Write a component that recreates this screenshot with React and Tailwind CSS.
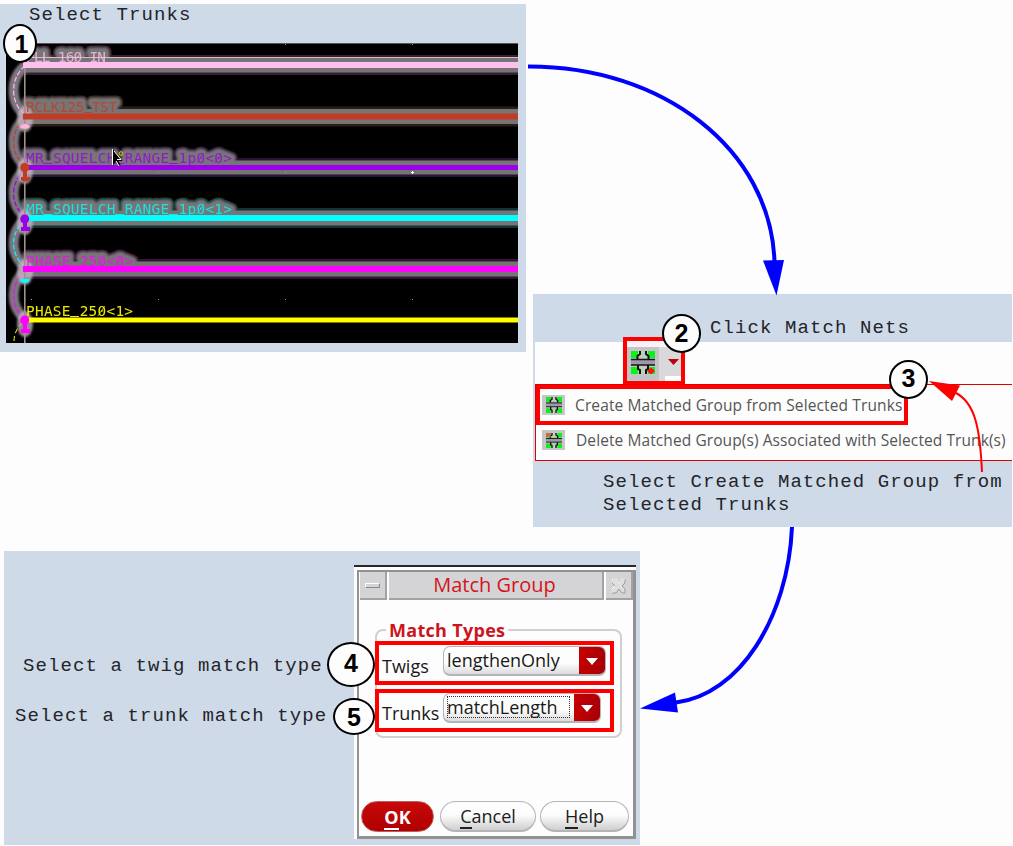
import React from "react";

const MONO = "font-['Liberation_Mono',monospace] text-[19px] leading-[23px] tracking-[1.09px] text-[#24242a] whitespace-pre";
const UI = "font-['Open_Sans','Noto_Sans',sans-serif] whitespace-nowrap";

const nets = [
  { label: "PLL_160_IN", color: "#ffc0ee", glow: "#35202f", y: 62, h: 6, base: 62, len: 80, lit: true },
  { label: "RCLK125_TST", color: "#c03c24", glow: "#2c1c18", y: 113.5, h: 6, base: 112, len: 91, lit: true },
  { label: "MR_SQUELCH_RANGE_1p0<0>", color: "#9a00ea", glow: "#281434", y: 165, h: 5, base: 163, len: 206, lit: true },
  { label: "MR_SQUELCH_RANGE_1p0<1>", color: "#00ffff", glow: "#0e3436", y: 215, h: 6, base: 214, len: 206, lit: true },
  { label: "PHASE_250<0>", color: "#ff00ff", glow: "#351238", y: 266, h: 6, base: 265.5, len: 107, lit: true },
  { label: "PHASE_250<1>", color: "#ffff00", glow: "#000000", y: 317.5, h: 5, base: 316, len: 107, lit: false },
];

const arcs = [
  { d: "M25 66C10 78 10 102 24 114", color: "#ffc0ee" },
  { d: "M25 119C10 130 10 153 24 165", color: "#c03c24" },
  { d: "M25 170C10 182 10 204 24 216", color: "#9a00ea" },
  { d: "M25 220C10 232 10 254 24 266", color: "#00ffff" },
  { d: "M25 271C10 284 10 306 24 318", color: "#ff00ff" },
];

function Marks({ net }) {
  const step = net.len / net.label.length;
  return [...net.label].map((ch, i) => {
    const x = 25.5 + i * step;
    if (ch === "_") return <rect key={i} x={x} y={net.base} width={step} height="1" fill={net.color} />;
    if (ch === "0") return <path key={i} d={`M${x + 1} ${net.base}l${step - 2} -10`} stroke={net.color} strokeWidth="0.8" />;
    return null;
  });
}

function TrunkCanvas() {
  return (
    <svg className="block" width="512" height="300" viewBox="6 43 512 300" fontFamily="'DejaVu Sans Mono', monospace" fontSize="14.4">
      <defs>
        <filter id="soft" x="-50%" y="-40%" width="200%" height="180%">
          <feGaussianBlur stdDeviation="1" />
        </filter>
      </defs>
      <rect x="6" y="43" width="512" height="300" fill="#000" />
      <rect x="6" y="43" width="512" height="1" fill="#555" />
      {nets.filter((n) => n.lit).map((n, i) => (
        <g key={i}>
          <rect x="24" y={n.y - 7} width="494" height={n.h + 14} fill={n.glow} />
          <text x="26" y={n.base} textLength={n.len} fill={n.glow} stroke={n.glow} strokeWidth="13" strokeLinejoin="round" aria-hidden="true">{n.label}</text>
          <rect x="24" y={n.y - 4.5} width="494" height={n.h + 9} fill="#777476" />
          <text x="26" y={n.base} textLength={n.len} fill="#777476" stroke="#777476" strokeWidth="9" strokeLinejoin="round" filter="url(#soft)" aria-hidden="true">{n.label}</text>
        </g>
      ))}
      {arcs.map((a, i) => (
        <path key={i} d={a.d} fill="none" stroke="#7d757f" strokeWidth="10" filter="url(#soft)" />
      ))}
      {arcs.map((a, i) => (
        <path key={i} d={a.d} fill="none" stroke={a.color} strokeWidth="1.2" strokeDasharray="5 2" />
      ))}
      <path d="M14 341Q14 330 24 321" fill="none" stroke="#ffff00" strokeDasharray="5 3" />
      <rect x="24" y="57" width="494" height="1" fill="#e0b8c8" />
      {[118, 170, 221, 271, 323].map((y, i) => (
        <ellipse key={i} cx="25" cy={y + 1} rx="8" ry="13" fill="#c9b9c6" opacity="0.75" filter="url(#soft)" />
      ))}
      <rect x="24" y="66" width="1.6" height="277" fill="#a58e8c" />
      {nets.map((n, i) => (
        <g key={i}>
          <rect x={i < 2 || i === 4 ? 23 : 28} y={n.y} width="495" height={n.h} fill={n.color} />
          <g opacity={n.lit ? 0.8 : 0.92}>
            <text x="26" y={n.base} textLength={n.len} fill={n.color}>{n.label}</text>
            <Marks net={n} />
          </g>
        </g>
      ))}
      <path d="M20 127a5 3 0 0 1 10 0q-5 4 -10 0z" fill="#ffb4dc" />
      <path d="M20 279h10q-1 4 -5 4t-5 -4z" fill="#00ffff" />
      <g fill="#c03c24"><circle cx="24.700" cy="167.500" r="4.500" /><path d="M23 168h4v9h3v3q-5 3 -9 0v-3h2z" /></g>
      <g fill="#9a00ea"><circle cx="24.700" cy="219" r="4.500" /><path d="M23 220h4v7h3v4h-9v-4h2z" /></g>
      <g fill="#ff00ff"><circle cx="24.700" cy="320" r="4.500" /><path d="M23 321h4v8h3v4h-9v-4h2z" /></g>
      <path d="M113 149v16l3.500-3.500 2 4.500 2-1-2-4h4z" fill="#000" />
      <path d="M112.500 149v16M116 161l3 5M114 151l7 8.500h-4" stroke="#fff" strokeWidth="1" fill="none" />
      <circle cx="121" cy="153.500" r="1.800" fill="none" stroke="#d8d000" />
      <path d="M411 172.500h3M412.500 171v3" stroke="#fff" />
      <path d="M285 44.500h1M412 44.500h1M158 172.500h1M285 172.500h1M158 299.500h1M285 299.500h1M412 299.500h1M31 299.500h1" stroke="#999" />
    </svg>
  );
}

function NetIcon({ w, h, dot, mark }) {
  return (
    <svg className="block shrink-0" width={w} height={h} viewBox="0 0 24 23" preserveAspectRatio="none">
      <path d="M0 0h24v7H0zM0 16h24v7H0z" fill="#0cf01c" />
      <path d="M7 0h10v7H7zM7 16h10v7H7z" fill="#b9d2b9" />
      <path d="M0 8h24v6H0z" fill="#a09aa8" />
      <path d="M0 8.500h24M0 14h24" stroke="#1a1420" strokeWidth="1.400" />
      <path d="M9 0v3L6.500 5v3M15 0v3l2.500 2v3M7 14v4l2 1v4M17 14v4l-2 1v4" fill="none" stroke="#101010" strokeWidth="2" />
      {dot && <path d="M20 17l3.500 3-3.500 3-3.500-3z" fill="#ff1010" stroke="#ff1010" />}
      {mark && <path d="M0 0l7 6M7 0L0 6" stroke="#ff4848" strokeWidth="2.500" />}
    </svg>
  );
}

function MenuPanel() {
  return (
    <section className="mt-[294px] ml-[7px] flex h-[233px] w-[479px] flex-col bg-[#cedae7]">
      <h2 className={"h-12 pt-[23px] pl-[177px] " + MONO}>Click Match Nets</h2>
      <div className="ml-[2px] flex h-[42px] bg-[#fdfdfd]">
        <div className="ml-[88px] -mt-[5px] flex h-12 w-[62px] items-end border-4 border-[#ff0000] bg-[#f8f2f8]">
          <div className="flex h-[34px] w-8 items-start justify-center bg-[#c4c4c6] pt-1">
            <NetIcon w={24} h={23} dot />
          </div>
          <div className="flex h-[34px] flex-1 flex-col bg-[#d9d8da]">
            <svg className="mt-[12px] ml-[9px]" width="11" height="6"><path d="M0 0h11L5.500 6z" fill="#c00010" /></svg>
            <span className="mt-auto ml-[6px] h-[5px] bg-white" />
          </div>
        </div>
      </div>
      <div className="ml-[2px] flex h-[77px] flex-col border border-r-0 border-[#e00000] bg-[#fdfdfd]">
        <div className="flex h-10 w-[372px] items-center border-4 border-[#ff0000] pl-[2px]">
          <div className="flex h-5 w-[23px] items-center justify-center bg-[#c6c6c8]"><NetIcon w={16} h={16} /></div>
          <span className={"ml-[10px] pt-px text-[15.5px] tracking-[0.12px] text-[#555] " + UI}>Create Matched Group from Selected Trunks</span>
        </div>
        <div className="flex h-[30px] items-center pl-[6px]">
          <div className="flex h-5 w-[23px] items-center justify-center bg-[#c6c6c8]"><NetIcon w={16} h={15} mark /></div>
          <span className={"ml-[11px] pt-px text-[15.5px] tracking-[0.09px] text-[#555] " + UI}>Delete Matched Group(s) Associated with Selected Trunk(s)</span>
        </div>
      </div>
      <p className={"pt-[10px] pl-[70px] " + MONO}>{"Select Create Matched Group from\nSelected Trunks"}</p>
    </section>
  );
}

function Combo({ value, focused }) {
  return (
    <div className={(focused ? "w-[158px]" : "w-[163px] mt-px") + " flex h-[30px] overflow-hidden rounded-[7px] border border-b-2 border-[#b4b4b6] bg-linear-to-b from-[#fdfdfd] from-60% to-[#dcdcde]"}>
      <div className={(focused ? "ml-[3px] mt-[2px] h-[22px] border border-dotted border-[#333]" : "ml-[3px] h-[26px]") + " flex flex-1 items-center"}>
        <span className={(focused ? "-ml-px " : "") + "text-[18px] leading-5 text-[#181818] " + UI}>{value}</span>
      </div>
      <div className="ml-1 flex h-[29px] w-[26px] items-center justify-center bg-linear-to-r from-[#c40000] to-[#a80008]">
        <svg width="12" height="7"><path d="M0 0h12L6 7z" fill="#fff" /></svg>
      </div>
    </div>
  );
}

function PillButton({ first, rest, cls }) {
  return (
    <button className={"flex h-[31px] items-center justify-center rounded-full border pt-[3px] text-[18px] " + cls + " " + UI}>
      <span className="border-b-2 border-current leading-[21px]">{first}</span>
      <span className="border-b-2 border-transparent leading-[21px]">{rest}</span>
    </button>
  );
}

function MatchDialog() {
  return (
    <div className="flex h-[274px] w-[282px] flex-col border-t-2 border-[#282830] bg-[#fdfdfd] pt-[3px] pl-[3px]">
      <div className="flex flex-1 flex-col border-t-2 border-r-[3px] border-b-[3px] border-l-2 border-[#929292] bg-[#fdfdfd]">
        <div className="ml-px flex h-[28px] w-[273px] gap-[2px]">
          <div className="flex w-[27px] items-center justify-center border-r-2 border-b-2 border-[#a2a2a4] bg-[#d4d4d6]">
            <span className="h-[5px] w-[15px] border border-r-[#888] border-b-[#888] border-t-white border-l-white" />
          </div>
          <div className={"flex flex-1 items-center justify-center border-r-2 border-b-2 border-[#a2a2a4] bg-[#d4d4d6] pr-[2px] text-[20px] leading-6 text-[#d41420] " + UI}>Match Group</div>
          <div className="flex w-[27px] items-center justify-center border-r-2 border-b-2 border-[#a2a2a4] bg-[#d4d4d6]">
            <svg width="17" height="17" viewBox="0 0 17 17">
              <path d="M2 2h4l3 4 3-4h3v4l-3 3 3 3v4h-3l-3-4-3 4H2v-4l3-3-3-3z" fill="#dededf" stroke="#9c9c9e" />
              <path d="M2 6V2h4l3 4 3-4h3M2 16v-4l3-3" fill="none" stroke="#fff" />
            </svg>
          </div>
        </div>
        <fieldset className="mt-[18px] ml-[16px] flex h-[120px] w-[247px] flex-col rounded-[8px] border-2 border-[#d0d0d0]">
          <legend className={"ml-[9px] px-[3px] text-[18px] leading-6 font-bold tracking-[0.3px] text-[#cc1420] " + UI}>Match Types</legend>
          <div className="-ml-[2px] -mt-px flex h-11 w-[239px] shrink-0 border-4 border-[#ff0000]">
            <span className={"w-16 pt-[9px] pl-[3px] text-[18px] leading-6 text-[#181818] " + UI}>Twigs</span>
            <Combo value="lengthenOnly" />
          </div>
          <div className="-ml-[2px] mt-1 flex h-[43px] w-[239px] shrink-0 border-4 border-[#ff0000]">
            <span className={"w-16 pt-[8px] pl-[3px] text-[18px] leading-6 text-[#181818] " + UI}>Trunks</span>
            <Combo value="matchLength" focused />
          </div>
        </fieldset>
        <div className="mt-auto mb-1 ml-[2px] flex">
          <PillButton first="O" rest="K" cls="w-[73px] border-[#b86060] bg-linear-to-b from-[#c80808] to-[#b00000] font-bold text-white" />
          <PillButton first="C" rest="ancel" cls="ml-[6px] w-[96px] border-b-2 border-[#b4b4b6] bg-linear-to-b from-[#fdfdfd] from-45% to-[#cfcfd1] text-[#202020]" />
          <PillButton first="H" rest="elp" cls="ml-1 w-[89px] border-b-2 border-[#b4b4b6] bg-linear-to-b from-[#fdfdfd] from-45% to-[#cfcfd1] text-[#202020]" />
        </div>
      </div>
    </div>
  );
}

function Callout({ n, cls }) {
  return (
    <div className={"absolute flex items-center justify-center rounded-[50%] border-2 border-black bg-[#fdfdfd] font-['Liberation_Sans',sans-serif] text-[25px] leading-none font-bold text-black " + cls}>{n}</div>
  );
}

export default function App() {
  return (
    <main className="relative h-[846px] w-[1013px] overflow-hidden bg-[#fdfdfd]">
      <div className="flex h-[527px] items-start">
        <section className="mt-1 h-[348px] w-[526px] bg-[#cedae7] pl-[6px]">
          <h2 className={"h-[39px] pl-[23px] " + MONO}>Select Trunks</h2>
          <TrunkCanvas />
        </section>
        <MenuPanel />
      </div>
      <section className="mt-6 ml-1 flex h-[294px] w-[636px] bg-[#cedae7]">
        <div className="flex w-[350px] flex-col gap-[27px] pt-[104px]">
          <p className={"pl-[19px] " + MONO}>Select a twig match type</p>
          <p className={"pl-[11px] " + MONO}>Select a trunk match type</p>
        </div>
        <div className="pt-[14px]"><MatchDialog /></div>
      </section>
      <svg className="pointer-events-none absolute inset-0" width="1013" height="846" fill="none">
        <path d="M528 66.500C662 66 771 149 774.500 262" stroke="#0000ff" strokeWidth="4" />
        <path d="M763 260.500l21-.5-7.500 35.500z" fill="#0000ff" />
        <path d="M792 527C788 618 739 695 676 702.500" stroke="#0000ff" strokeWidth="4" />
        <path d="M640 708.500L675 692.500l3 20z" fill="#0000ff" />
        <path d="M982 472C980 428 975 403 956 393" stroke="#ff0000" strokeWidth="2" />
        <path d="M929 381l31 4.500-8 15.500z" fill="#ff0000" />
      </svg>
      <Callout n="1" cls="left-[3px] top-[24px] h-[39px] w-[34px] pl-[3px] pt-[2px]" />
      <Callout n="2" cls="left-[662px] top-[314px] h-[39px] w-[39px]" />
      <Callout n="3" cls="left-[889px] top-[360px] h-[39px] w-[39px] pb-[2px]" />
      <Callout n="4" cls="left-[327px] top-[642px] h-[45px] w-[48px] pb-[2px]" />
      <Callout n="5" cls="left-[333px] top-[698px] h-[37px] w-[42px] pt-[2px]" />
    </main>
  );
}
